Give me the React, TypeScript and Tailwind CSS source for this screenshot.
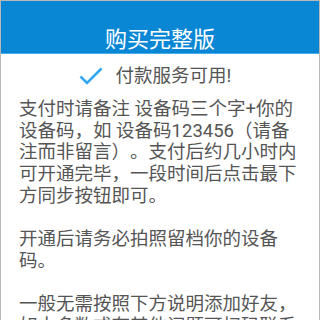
import React from "react";

export default function App() {
  const font = { fontFamily: "Roboto, 'Noto Sans CJK SC', sans-serif" };
  return (
    <div
      className="w-[320px] h-[320px] overflow-hidden border-x border-t border-[#b8b8b8] bg-white [text-spacing-trim:space-all]"
      style={font}
    >
      <div className="h-[52px] bg-[#0a87d4] flex justify-center">
        <div className="pt-[26px] text-[22px] leading-[26px] text-white">购买完整版</div>
      </div>
      <div className="h-px bg-[#45aee9]" />
      <div className="mt-[11px] flex items-center justify-center gap-[13px] pr-[10px]">
        <svg width="24" height="18" viewBox="0 0 24 18" className="shrink-0">
          <path
            d="M1.5 9.5 L8 16 L22.5 1.5"
            fill="none"
            stroke="#33a8f0"
            strokeWidth="2.6"
            strokeLinecap="butt"
            strokeLinejoin="miter"
          />
        </svg>
        <div className="text-[18.5px] leading-[22px] text-[#555555]">付款服务可用!</div>
      </div>
      <div className="mt-[12px] pl-[18px] pr-[20px] text-[18.5px] leading-[21.7px] text-[#555555]">
        <p>支付时请备注 设备码三个字+你的设备码，如 设备码123456（请备注而非留言）。支付后约几小时内可开通完毕，一段时间后点击最下方同步按钮即可。</p>
        <p className="mt-[21.7px]">开通后请务必拍照留档你的设备码。</p>
        <p className="mt-[21.7px]">一般无需按照下方说明添加好友，如大多数或有其他问题可扫码联系客服。</p>
      </div>
    </div>
  );
}
